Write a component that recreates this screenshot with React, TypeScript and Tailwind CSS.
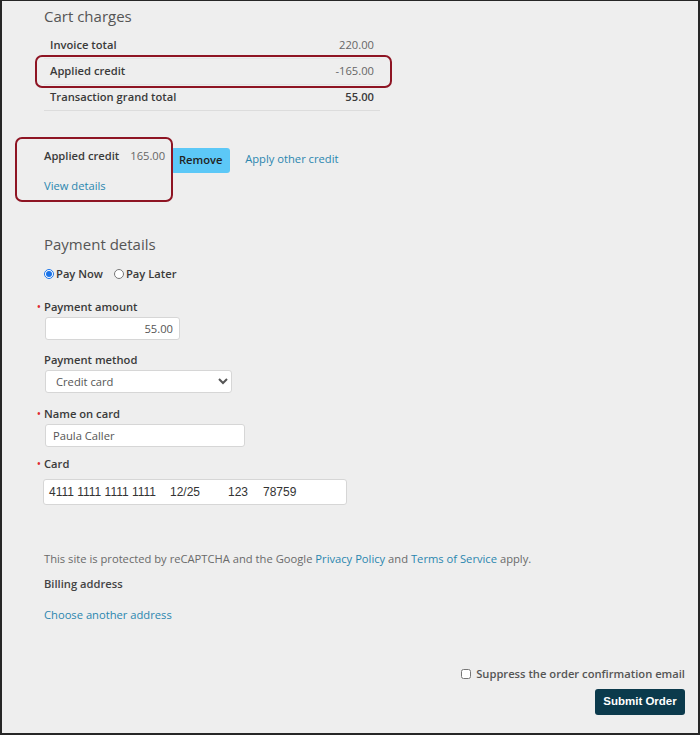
import React, { useState } from "react";

const Req = ({ children }: { children: React.ReactNode }) => (
  <div className="relative h-[18px] text-[11.2px] font-semibold leading-[18px] text-[#3a3a3a]">
    <span className="absolute left-[-7px] top-[-1px] text-[10px] text-[#e0282e]">•</span>
    {children}
  </div>
);

const App: React.FC = () => {
  const [pay, setPay] = useState("now");
  const [method, setMethod] = useState("cc");

  const rows = [
    { label: "Invoice total", value: "220.00", strong: false },
    { label: "Applied credit", value: "-165.00", strong: false },
    { label: "Transaction grand total", value: "55.00", strong: true },
  ];

  return (
    <div
      className="relative h-[735px] w-[700px] overflow-hidden border-t border-l-2 border-r-2 border-b-2 border-[#262626] bg-[#eeeeee] text-[11.2px] text-[#444]"
      style={{ fontFamily: '"Open Sans", "Liberation Sans", sans-serif' }}
    >
      <div className="pl-[42px]">
        <h2 className="pt-[5px] text-[15px] font-normal leading-[20px] text-[#555]">Cart charges</h2>

        <div className="mt-[6px] w-[336px] border-b border-[#dcdcdc]">
          {rows.map((r, i) => (
            <div
              key={r.label}
              className={`flex h-[26px] items-center justify-between px-[6px] ${i > 0 ? "border-t border-[#e4e4e4]" : ""}`}
            >
              <span className="font-semibold text-[#3a3a3a]">{r.label}</span>
              <span className={r.strong ? "font-semibold text-[#3a3a3a]" : "text-[#666]"}>{r.value}</span>
            </div>
          ))}
        </div>

        <div className="mt-[37px] flex items-start">
          <span className="leading-[16px] font-semibold text-[#3a3a3a]">Applied credit</span>
          <span className="ml-[11px] leading-[16px] text-[#666]">165.00</span>
          <button className="ml-[6px] h-[25px] w-[59px] rounded-[3px] bg-[#5cc8f7] text-[11.2px] font-semibold text-[#222]">
            Remove
          </button>
          <a className="ml-[15px] mt-[3px] leading-[16px] text-[#2a86ae]" href="#">
            Apply other credit
          </a>
        </div>
        <a className="mt-[5px] block leading-[16px] text-[#2a86ae]" href="#">
          View details
        </a>

        <h2 className="mt-[40px] text-[15px] font-normal leading-[20px] text-[#555]">Payment details</h2>

        <div className="mt-[11px] flex h-[18px] items-center font-semibold text-[#3a3a3a]">
          <label className="flex items-center gap-[2px]">
            <input
              type="radio"
              name="pay"
              checked={pay === "now"}
              onChange={() => setPay("now")}
              className="m-0 h-[10px] w-[10px] accent-[#1a73e8]"
            />
            Pay Now
          </label>
          <label className="ml-[11px] flex items-center gap-[2px]">
            <input
              type="radio"
              name="pay"
              checked={pay === "later"}
              onChange={() => setPay("later")}
              className="m-0 h-[10px] w-[10px]"
            />
            Pay Later
          </label>
        </div>

        <div className="mt-[15px]">
          <Req>Payment amount</Req>
          <input
            readOnly
            value="55.00"
            className="mt-[1px] ml-[1px] h-[23px] w-[135px] rounded-[3px] border border-[#d6d6d6] bg-white px-[6px] text-right text-[11.2px] text-[#555] outline-none"
          />
        </div>

        <div className="mt-[11px]">
          <div className="h-[18px] font-semibold leading-[18px] text-[#3a3a3a]">Payment method</div>
          <select
            value={method}
            onChange={(e) => setMethod(e.target.value)}
            className="mt-[1px] ml-[1px] h-[23px] w-[187px] rounded-[3px] border border-[#d6d6d6] bg-white px-[6px] text-[11.2px] text-[#555] outline-none"
          >
            <option value="cc">Credit card</option>
            <option value="check">Check</option>
          </select>
        </div>

        <div className="mt-[12px]">
          <Req>Name on card</Req>
          <input
            readOnly
            value="Paula Caller"
            className="mt-[1px] ml-[1px] h-[23px] w-[200px] rounded-[3px] border border-[#d6d6d6] bg-white px-[7px] text-[11.2px] text-[#555] outline-none"
          />
        </div>

        <div className="mt-[8px]">
          <Req>Card</Req>
          <div
            className="mt-[6px] ml-[-1px] flex h-[26px] w-[304px] items-center rounded-[3px] border border-[#d6d6d6] bg-white pl-[5px] text-[12px] text-[#333]"
            style={{ fontFamily: '"Liberation Sans", Arial, sans-serif' }}
          >
            <span className="w-[121px]">4111 1111 1111 1111</span>
            <span className="w-[58px]">12/25</span>
            <span className="w-[35px]">123</span>
            <span>78759</span>
          </div>
        </div>

        <p className="mt-[46px] leading-[16px] text-[#6a6a6a]">
          This site is protected by reCAPTCHA and the Google{" "}
          <a href="#" className="text-[#2a86ae]">Privacy Policy</a> and{" "}
          <a href="#" className="text-[#2a86ae]">Terms of Service</a> apply.
        </p>
        <div className="mt-[9px] leading-[16px] font-semibold text-[#444]">Billing address</div>
        <a href="#" className="mt-[15px] block leading-[16px] text-[#2a86ae]">
          Choose another address
        </a>
      </div>

      <div className="mt-[43px] flex flex-col items-end pr-[13px]">
        <label className="flex h-[16px] items-center gap-[5px] font-semibold text-[#555]">
          <input type="checkbox" className="m-0 h-[10px] w-[10px]" />
          Suppress the order confirmation email
        </label>
        <button
          className="mt-[7px] h-[26px] w-[90px] rounded-[3px] bg-[#0b3a4c] text-[11.5px] font-bold text-white"
          style={{ fontFamily: '"Liberation Sans", Arial, sans-serif' }}
        >
          Submit Order
        </button>
      </div>

      {/* annotation boxes */}
      <div className="pointer-events-none absolute left-[33px] top-[54px] h-[33px] w-[357px] rounded-[7px] border-2 border-[#8e1423]" />
      <div className="pointer-events-none absolute left-[13px] top-[136px] h-[65px] w-[158px] rounded-[7px] border-2 border-[#8e1423]" />
    </div>
  );
};

export default App;
